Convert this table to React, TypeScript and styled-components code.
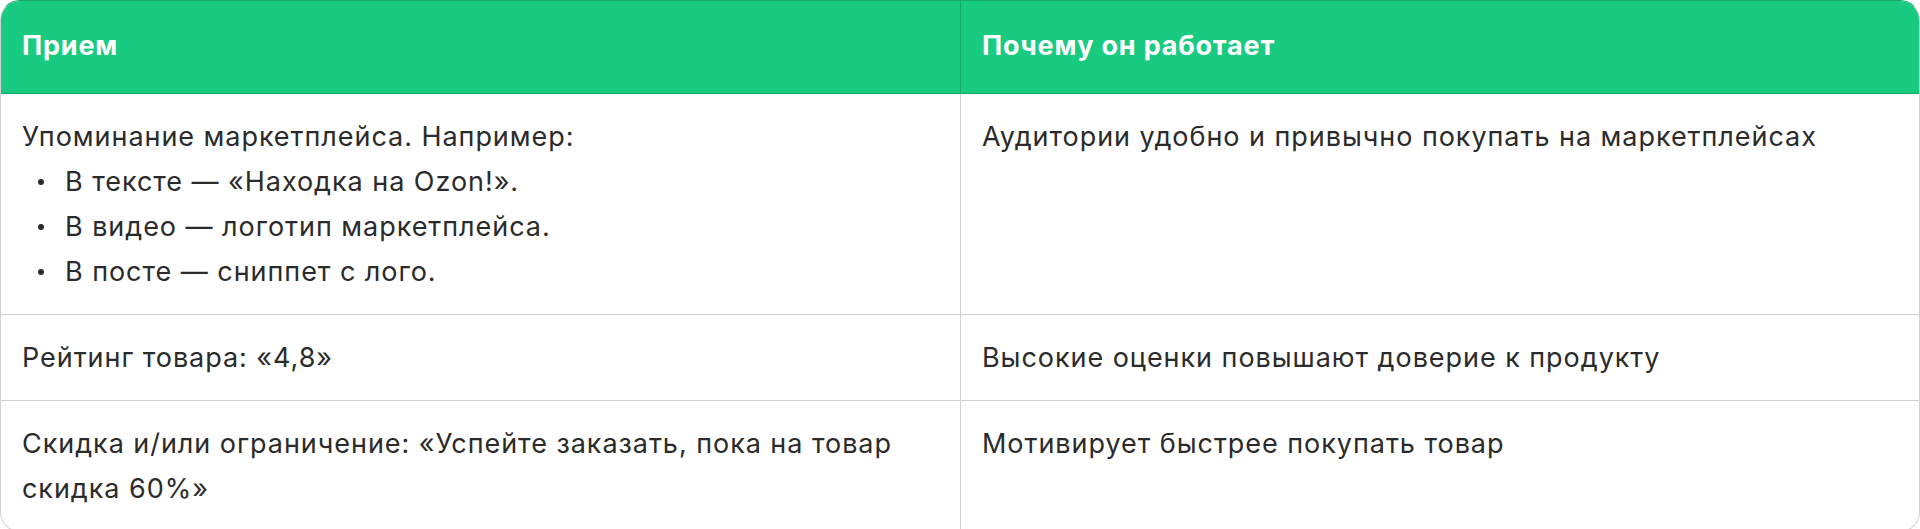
import styled, {createGlobalStyle} from "styled-components";

const GlobalStyle = createGlobalStyle`
    html, body {
        margin: 0;
        padding: 0;
        background: #ffffff;
    }

    body {
        font-family: Inter, "Noto Sans", sans-serif;
    }
`

const Table = styled.div`
    box-sizing: border-box;
    width: 1920px;
    border: 1px solid #d2d2d2;
    border-top-color: #17a86a;
    border-radius: 20px;
    overflow: hidden;
    color: #2b2b2b;
`

const HeadRow = styled.div`
    display: grid;
    grid-template-columns: 959px 1fr;
    height: 92px;
    background-color: #19cb80;
    border-bottom: 1px solid #17a86a;
`

const HeadCell = styled.div`
    display: flex;
    align-items: center;
    padding: 0 21px;
    padding-bottom: 4px;
    font-size: 27px;
    font-weight: 700;
    letter-spacing: 0.8px;
    color: #ffffff;

    & + & {
        border-left: 1px solid #17a86a;
    }
`

const BodyRow = styled.div`
    display: grid;
    grid-template-columns: 959px 1fr;

    & + & {
        border-top: 1px solid #d2d2d2;
    }
`

const BodyCell = styled.div`
    padding: 20px 21px;
    font-size: 27px;
    line-height: 45px;
    letter-spacing: 0.95px;

    & + & {
        border-left: 1px solid #d2d2d2;
    }
`

const Text = styled.p`
    margin: 0;
`

const BulletList = styled.ul`
    margin: 0;
    padding: 0 0 0 16px;
    list-style: none;
`

const Bullet = styled.li`
    display: flex;
    align-items: center;
    gap: 21px;

    &::before {
        content: '';
        flex: 0 0 auto;
        width: 6px;
        height: 6px;
        border-radius: 50%;
        background-color: #2b2b2b;
    }
`

type Row = {
    technique: React.ReactNode
    reason: string
}

const rows: Row[] = [
    {
        technique: (
            <>
                <Text>Упоминание маркетплейса. Например:</Text>
                <BulletList>
                    <Bullet>В тексте — «Находка на Ozon!».</Bullet>
                    <Bullet>В видео — логотип маркетплейса.</Bullet>
                    <Bullet>В посте — сниппет с лого.</Bullet>
                </BulletList>
            </>
        ),
        reason: "Аудитории удобно и привычно покупать на маркетплейсах",
    },
    {
        technique: <Text>Рейтинг товара: «4,8»</Text>,
        reason: "Высокие оценки повышают доверие к продукту",
    },
    {
        technique: <Text>Скидка и/или ограничение: «Успейте заказать, пока на товар скидка 60%»</Text>,
        reason: "Мотивирует быстрее покупать товар",
    },
]

export default function App() {
    return (
        <>
            <GlobalStyle/>
            <Table>
                <HeadRow>
                    <HeadCell>Прием</HeadCell>
                    <HeadCell>Почему он работает</HeadCell>
                </HeadRow>
                {rows.map((row, i) => (
                    <BodyRow key={i}>
                        <BodyCell>{row.technique}</BodyCell>
                        <BodyCell><Text>{row.reason}</Text></BodyCell>
                    </BodyRow>
                ))}
            </Table>
        </>
    );
}
